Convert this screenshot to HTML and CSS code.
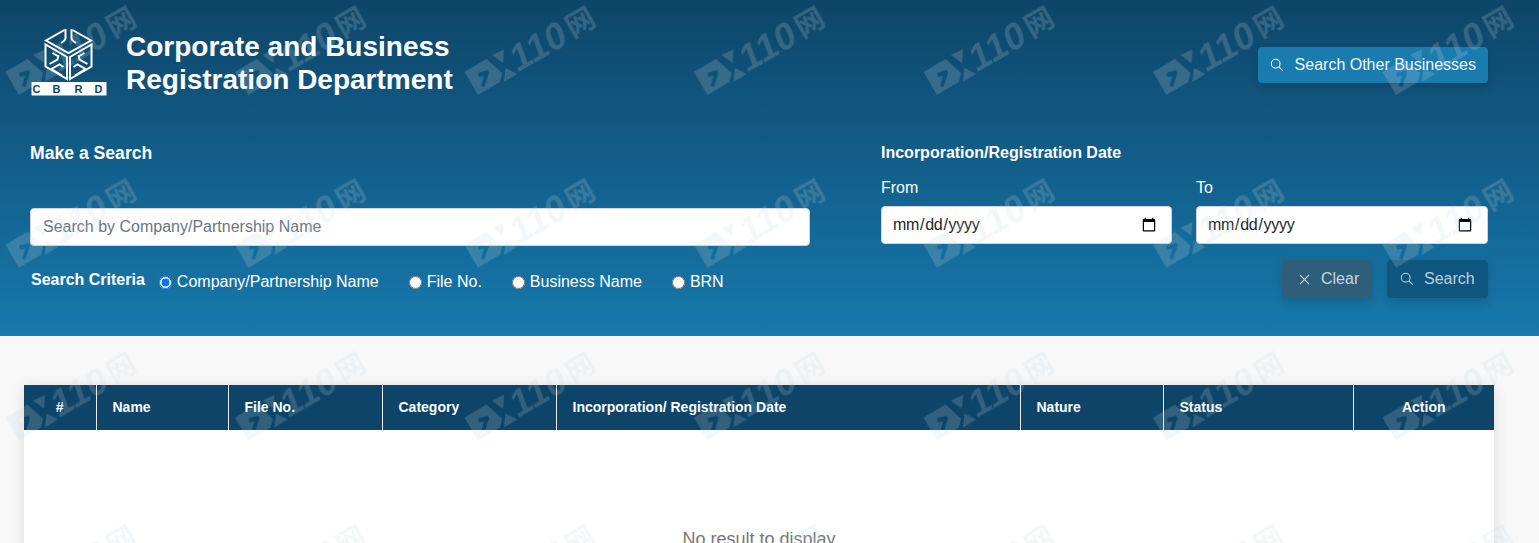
FILE: index.html
```html
<!DOCTYPE html>
<html>
<head>
    <title>Corporate and Business Registration Department</title>
    <link rel="stylesheet" href="styles.css">
</head>
<body>
<header class="hero">
    <div class="top-row">
        <div class="brand">
            <svg class="logo" viewBox="0 0 76 68" aria-label="CBRD">
                <g fill="none" stroke="#fff" stroke-width="2">
                    <path d="M34 2 15.500 12.500 38 25 60.500 12.500 42 2"/>
                    <path d="M35 1v9c0 2-2 3.500-4.500 5M41 1v9c0 2 2 3.500 4.500 5"/>
                    <path d="M15 16.500v22L36.500 51V29z"/>
                    <path d="M61 16.500v22L39.500 51V29z"/>
                    <path d="M19 36l8-4.500 1-4.500M22 25l6 3.500M31.500 47.500 21 41l8-4.500 4 2.500"/>
                    <path d="M57 36l-8-4.500-1-4.500M54 25l-6 3.500M44.500 47.500 55 41l-8-4.500-4 2.500"/>
                </g>
                <rect x="1" y="54" width="75" height="13.500" fill="#fff"/>
                <text class="logo-text" x="6 26 48 68" y="65" text-anchor="middle">CBRD</text>
            </svg>
            <h1 class="title">Corporate and Business<br>Registration Department</h1>
        </div>
        <button class="btn btn-other">
            <svg class="icon" viewBox="0 0 16 16"><circle cx="6.500" cy="6.500" r="5"/><path d="M10.200 10.200 14.500 14.500"/></svg>
            Search Other Businesses
        </button>
    </div>

    <div class="search-row">
        <div class="search-main">
            <h2 class="label-head">Make a Search</h2>
            <input class="field field-name" type="text" placeholder="Search by Company/Partnership Name">
            <div class="criteria">
                <strong class="criteria-head">Search Criteria</strong>
                <label class="radio radio-wide"><input type="radio" name="criteria" checked>Company/Partnership Name</label>
                <label class="radio"><input type="radio" name="criteria">File No.</label>
                <label class="radio"><input type="radio" name="criteria">Business Name</label>
                <label class="radio"><input type="radio" name="criteria">BRN</label>
            </div>
        </div>
        <div class="search-dates">
            <h2 class="label-head label-small">Incorporation/Registration Date</h2>
            <div class="date-grid">
                <label class="date-col">From<input class="field" type="date"></label>
                <label class="date-col">To<input class="field" type="date"></label>
            </div>
            <div class="actions">
                <button class="btn btn-clear">
                    <svg class="icon icon-x" viewBox="0 0 12 12"><path d="M1 1 11 11M11 1 1 11"/></svg>
                    Clear
                </button>
                <button class="btn btn-search">
                    <svg class="icon" viewBox="0 0 16 16"><circle cx="6.500" cy="6.500" r="5"/><path d="M10.200 10.200 14.500 14.500"/></svg>
                    Search
                </button>
            </div>
        </div>
    </div>
</header>

<main class="results">
    <div class="card">
        <table class="table">
            <thead>
                <tr>
                    <th class="col-num">#</th>
                    <th class="col-name">Name</th>
                    <th class="col-file">File No.</th>
                    <th class="col-cat">Category</th>
                    <th class="col-date">Incorporation/ Registration Date</th>
                    <th class="col-nature">Nature</th>
                    <th class="col-status">Status</th>
                    <th class="col-action">Action</th>
                </tr>
            </thead>
        </table>
        <p class="empty">No result to display</p>
    </div>
</main>

<svg class="watermark" aria-hidden="true">
    <defs>
        <pattern id="mark" x="5" y="0" width="229.500" height="172.800" patternUnits="userSpaceOnUse">
            <path fill-rule="evenodd" d="M0.500 72 22.500 59 38 73 36 82 14 95zM14 73 24 70 25 73 20.500 87 17 86 20 76 15 77z"/>
            <path d="M28 55 40 49.500 39 63z"/>
            <path d="M41.500 68 53 74 40 82z"/>
            <g transform="translate(53 73) rotate(-30)">
                <text class="wm-num" transform="skewX(-10)" x="0" y="0">110</text>
                <text class="wm-cjk" x="65.500" y="-2">网</text>
            </g>
        </pattern>
    </defs>
    <rect width="100%" height="100%" fill="url(#mark)"/>
</svg>
</body>
</html>
```

FILE: styles.css
```css
html, body {
    padding:0;
    margin:0;
    height:100%;
    overflow:hidden;
    background:#f8f8f8;
    font-family: "Liberation Sans", Arial, sans-serif;
    color:#212529;
}

.hero {
    height:336px;
    box-sizing:border-box;
    padding:28px 51px 0 30px;
    background:linear-gradient(180deg, #0e4568 0%, #1779ad 100%);
    color:#fff;
}

.top-row {
    display:flex;
    justify-content:space-between;
    align-items:flex-start;
    height:113px;
}

.brand {
    display:flex;
    align-items:flex-start;
    gap:19px;
}

.logo {
    width:77px;
    height:68px;
    flex:none;
}

.logo-text {
    font-family: "Liberation Sans", Arial, sans-serif;
    font-size:11px;
    font-weight:bold;
    fill:#0e4568;
}

.title {
    margin:2px 0 0;
    font-size:28px;
    line-height:33px;
    font-weight:bold;
}

.btn {
    display:inline-flex;
    align-items:center;
    gap:10px;
    height:38px;
    box-sizing:border-box;
    padding:0 12px;
    border:none;
    border-radius:4px;
    font-family:inherit;
    font-size:16px;
    color:#fff;
    box-shadow:0 4px 10px rgba(0, 0, 0, .15);
}

.btn-other {
    margin-top:19px;
    height:36px;
    gap:11px;
    background:#1a7bae;
    color:#f2f7fa;
}

.icon {
    width:14px;
    height:14px;
    fill:none;
    stroke:currentColor;
    stroke-width:1.200;
}

.icon-x {
    width:11px;
    height:11px;
}

.search-row {
    display:flex;
    justify-content:space-between;
}

.search-main {
    width:780px;
}

.search-dates {
    width:607px;
}

.label-head {
    margin:0;
    font-size:17.600px;
    line-height:24px;
    font-weight:bold;
}

.label-small {
    font-size:16px;
}

.field {
    display:block;
    width:100%;
    height:38px;
    box-sizing:border-box;
    padding:0 12px;
    border:1px solid #ced4da;
    border-radius:4px;
    background:#fff;
    font-family:inherit;
    font-size:16px;
    color:#212529;
}

.field::placeholder {
    color:#6c757d;
}

.field[type="date"] {
    padding-left:10px;
}

.field::-webkit-datetime-edit {
    letter-spacing:-.3px;
}

.field-name {
    margin-top:43px;
}

.criteria {
    display:flex;
    align-items:center;
    margin-top:22px;
    padding-left:1px;
}

.criteria-head {
    font-size:16px;
    line-height:24px;
    margin-right:14px;
    margin-bottom:4px;
}

.radio {
    display:flex;
    align-items:center;
    font-size:16px;
    line-height:24px;
    margin-right:30px;
}

.radio input {
    margin:0 5px 0 0;
}

.date-grid {
    display:grid;
    grid-template-columns:291px 292px;
    justify-content:space-between;
    margin-top:11px;
}

.date-col {
    display:block;
    font-size:16px;
    line-height:24px;
}

.date-col .field {
    margin-top:6px;
}

.actions {
    display:flex;
    justify-content:flex-end;
    gap:15px;
    margin-top:16px;
}

.btn-clear {
    width:90px;
    padding-left:17px;
    gap:11px;
    background:#2f5e79;
    color:#c4d6e1;
}

.btn-search {
    width:101px;
    padding-left:13px;
    background:#0f567f;
    color:#b9cfdd;
}

.results {
    padding:49px 45px 0 24px;
}

.card {
    background:#fff;
    height:400px;
    box-shadow:0 2px 14px rgba(0, 0, 0, .12);
}

.table {
    width:100%;
    table-layout:fixed;
    border-collapse:collapse;
}

.table th {
    height:45px;
    padding:0 16px 2px;
    box-sizing:border-box;
    background:#0d4467;
    border-left:1px solid #e8edf0;
    color:#fff;
    font-size:14px;
    font-weight:bold;
    text-align:left;
}

.table th:first-child {
    border-left:none;
}

.table .col-num { width:72px; text-align:center; }
.table .col-name { width:132px; }
.table .col-file { width:154px; }
.table .col-cat { width:174px; }
.table .col-date { width:464px; }
.table .col-nature { width:143px; }
.table .col-status { width:190px; }
.table .col-action { text-align:center; }

.empty {
    margin:96px 0 0;
    text-align:center;
    font-size:18px;
    line-height:27px;
    color:#777;
}

.watermark {
    position:absolute;
    top:0;
    left:0;
    width:100%;
    height:100%;
    pointer-events:none;
    fill:rgba(200, 215, 226, .2);
}

.wm-num {
    font-family: "Liberation Sans", Arial, sans-serif;
    font-size:37px;
    font-weight:bold;
}

.wm-cjk {
    font-family: "Noto Sans CJK SC", sans-serif;
    font-size:29px;
    font-weight:bold;
}
```
